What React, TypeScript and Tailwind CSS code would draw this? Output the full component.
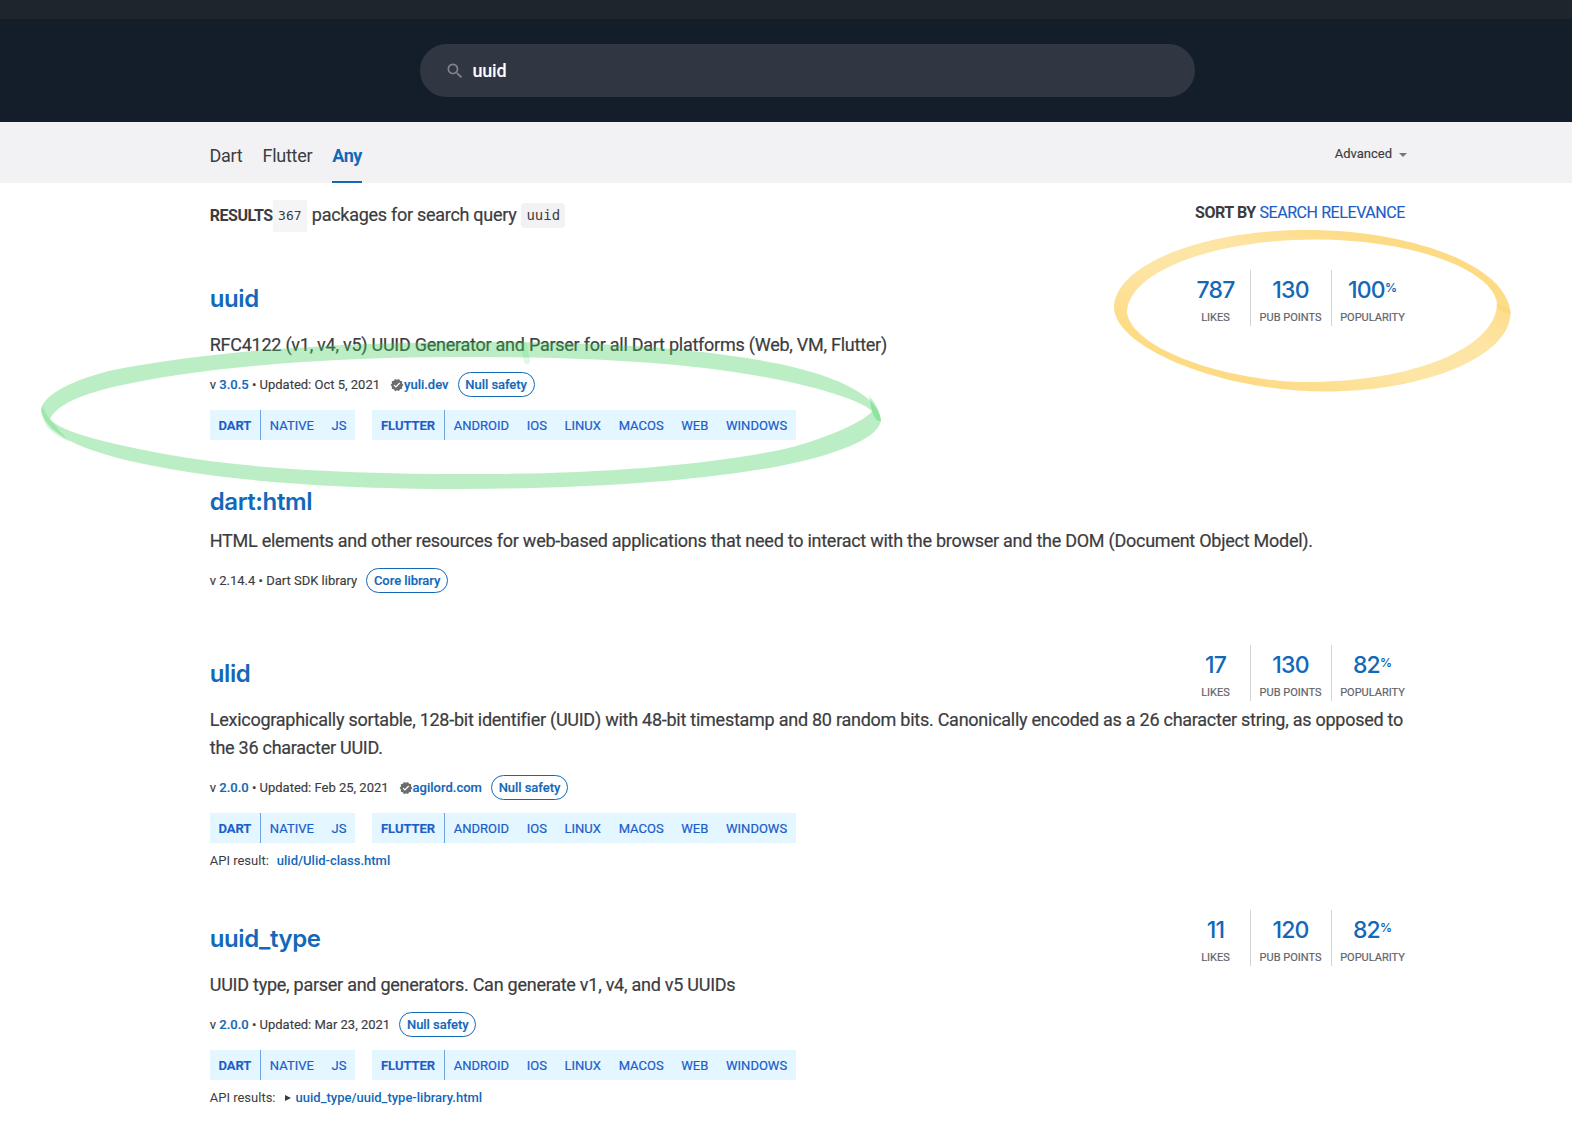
import type { ReactNode } from 'react';

type Score = { likes: string; points: string; popularity: string };

function SearchIcon() {
  return (
    <svg viewBox="0 0 24 24" className="size-5 fill-[#7f848c]">
      <path d="M15.5 14h-.79l-.28-.27A6.471 6.471 0 0 0 16 9.5 6.5 6.5 0 1 0 9.5 16c1.61 0 3.09-.59 4.23-1.57l.27.28v.79l5 4.99L20.49 19l-4.99-5zm-6 0C7.01 14 5 11.99 5 9.5S7.01 5 9.5 5 14 7.01 14 9.5 11.99 14 9.5 14z" />
    </svg>
  );
}

function VerifiedIcon() {
  return (
    <svg viewBox="0 0 24 24" className="size-[14px] shrink-0 fill-[#6d6d6d]">
      <path d="M23 12l-2.44-2.79.34-3.69-3.61-.82-1.89-3.2L12 2.96 8.6 1.5 6.71 4.69 3.1 5.5l.34 3.7L1 12l2.44 2.79-.34 3.7 3.61.82L8.6 22.5l3.4-1.47 3.4 1.46 1.89-3.19 3.61-.82-.34-3.69L23 12zm-12.91 4.72l-3.8-3.81 1.48-1.48 2.32 2.33 5.85-5.87 1.48 1.48-7.33 7.35z" />
    </svg>
  );
}

function Stat({ value, label, className, suffix }: { value: string; label: string; className: string; suffix?: string }) {
  return (
    <div className={`flex h-14 flex-col items-center ${className}`}>
      <div className="mt-1 flex h-8 items-center font-[Inter] text-[23px] font-medium tracking-[-0.8px] text-[#1268b9]">
        {value}
        {suffix && <span className="mb-[5px] text-[12px] font-semibold tracking-normal">{suffix}</span>}
      </div>
      <div className="h-5 whitespace-nowrap text-[11px] leading-[23px] text-[#5f6368] [-webkit-text-stroke:0.2px_#5f6368]">{label}</div>
    </div>
  );
}

function Scores({ score }: { score: Score }) {
  return (
    <div className="-mt-[13px] flex">
      <Stat value={score.likes} label="LIKES" className="w-[70px] pl-px" />
      <Stat value={score.points} label="PUB POINTS" className="w-[81px] border-l border-[#d4d4d6] pr-px" />
      <Stat value={score.popularity} suffix="%" label="POPULARITY" className="w-[75px] border-l border-[#d4d4d6] pl-[7px]" />
    </div>
  );
}

function Heading({ name, score }: { name: string; score?: Score }) {
  return (
    <div className="flex h-8 items-start justify-between">
      <h3 className="font-[Inter] text-[24px] font-semibold leading-8 tracking-[-0.4px] text-[#1268b9]">{name}</h3>
      {score && <Scores score={score} />}
    </div>
  );
}

function Pill({ children }: { children: ReactNode }) {
  return (
    <span className="ml-[9px] flex h-[25px] items-center rounded-full border border-[#1268b9] px-[6.8px] font-medium tracking-[-0.05px] text-[#1268b9]">
      {children}
    </span>
  );
}

function Meta({ children }: { children: ReactNode }) {
  return <div className="mt-[13px] flex h-[25px] items-center whitespace-pre text-[13px] [-webkit-text-stroke:0.15px_currentColor]">{children}</div>;
}

function Link({ children }: { children: ReactNode }) {
  return <a className="font-medium text-[#1268b9]">{children}</a>;
}

function TagGroup({ main, tags }: { main: string; tags: string[] }) {
  return (
    <div className="flex h-[30px] items-center bg-[#e4f6ff] text-[13px] text-[#1b5dc9] [-webkit-text-stroke:0.2px_#1b5dc9]">
      <span className="flex h-full items-center border-r border-[#6fa3e0] px-[8.7px] pt-px font-semibold">{main}</span>
      {tags.map((t) => (
        <span key={t} className="px-[8.85px] pt-px">{t}</span>
      ))}
    </div>
  );
}

function Tags() {
  return (
    <div className="mt-[13px] flex gap-[17px]">
      <TagGroup main="DART" tags={['NATIVE', 'JS']} />
      <TagGroup main="FLUTTER" tags={['ANDROID', 'IOS', 'LINUX', 'MACOS', 'WEB', 'WINDOWS']} />
    </div>
  );
}

function Annotations() {
  return (
    <svg viewBox="0 0 1572 1134" className="pointer-events-none absolute left-0 top-0 h-[1134px] w-[1572px]">
      <defs>
        <linearGradient id="amber" x1="0" y1="1" x2="1" y2="0">
          <stop offset="0.2" stopColor="#fbb90f" stopOpacity="0.51" />
          <stop offset="0.42" stopColor="#fcbe1e" stopOpacity="0.4" />
          <stop offset="0.6" stopColor="#fcbe1e" stopOpacity="0.4" />
          <stop offset="0.8" stopColor="#fbb90f" stopOpacity="0.51" />
        </linearGradient>
      </defs>
      <path
        fillRule="evenodd"
        fill="url(#amber)"
        d="M1114 308C1114 265 1202 230 1307 230C1412 230 1508 266 1510.500 313C1510.500 356 1426 391.500 1325 391.500C1222 391.500 1116 348 1114 308Z M1127 313C1127 272 1213 239.500 1317 239.500C1408 239.500 1492 268 1497 303C1497 348 1412 382 1307 382C1235 382 1134 352 1127 313Z"
      />
      <path d="M1496 306Q1502 312 1511 315L1511 310Q1504 308 1497 303Z" fill="#fbb90f" fillOpacity="0.15" />
      <path
        fillRule="evenodd"
        fill="#3ccd5a"
        fillOpacity="0.35"
        d="M41 410C43 394 75 379 113 370C225 349 350 342 490 342C600 342 700 348 780 364C840 377 878 396 881 420C879 440 830 456 780 466C690 483 570 489 460 489C330 489 230 480 170 469C90 455 46 437 41 410Z M50 419C58 403 85 394 113 387C200 367 330 357 460 357C590 357 690 362 780 380C820 388 860 400 872 411C865 422 820 441 780 450C690 467 590 474 470 474C350 474 250 469 170 455C110 444 60 432 50 419Z"
      />
      <path d="M41 410Q42 419 48 428Q58 437 70 442Q60 432 50 419Q45 414 43 406Z" fill="#3ccd5a" fillOpacity="0.22" />
      <path d="M869 396Q880 408 881 421L878 421Q873 416 872 411Z" fill="#3ccd5a" fillOpacity="0.35" />
      <path d="M524 345Q525 354 527 361" fill="none" stroke="#3ccd5a" strokeOpacity="0.15" strokeWidth="6" strokeLinecap="round" />
    </svg>
  );
}

const paragraph = 'whitespace-nowrap text-[18px] leading-7 tracking-[-0.255px] [-webkit-text-stroke:0.2px_#3c3c3e]';

export default function App() {
  return (
    <div className="relative h-[1134px] w-[1572px] overflow-hidden bg-white font-[Roboto,sans-serif] text-[#3c3c3e]">
      <div className="h-[19px] bg-[#1e252d]" />
      <header className="h-[103px] bg-[#131e2a] pl-[420px] pt-[25px]">
        <div className="flex h-[53px] w-[775px] items-center rounded-full bg-[#313742] pl-[25px] text-[18px] font-medium tracking-[-0.2px] text-white">
          <SearchIcon />
          <span className="ml-[7.5px]">uuid</span>
        </div>
      </header>
      <nav className="flex h-[61px] justify-between bg-[#f2f2f5] pl-[209.5px] pr-[165px]">
        <div className="flex gap-5 text-[18px] leading-[68px] tracking-[-0.26px]">
          <span>Dart</span>
          <span>Flutter</span>
          <span className="h-[61px] border-b-2 border-[#1268b9] font-bold tracking-[-0.45px] text-[#1268b9]">Any</span>
        </div>
        <div className="flex h-[63px] items-center text-[13px] [-webkit-text-stroke:0.15px_#3c3c3e]">
          Advanced
          <span className="ml-[7px] mt-[2px] border-x-4 border-t-4 border-x-transparent border-t-[#77777a]" />
        </div>
      </nav>
      <main className="w-[1406px] pl-[209.75px]">
        <div className="flex h-[100px] justify-between pt-[17px]">
          <div className="flex h-8 items-center whitespace-pre text-[18px]">
            <strong className="text-[16px] font-bold tracking-[-0.45px]">RESULTS</strong>
            <code className="h-8 bg-[#f5f5f7] px-[5.300px] font-['DejaVu_Sans_Mono'] text-[13px] leading-8">367</code>
            <span className="mb-[3px] ml-[5px] tracking-[-0.28px] [-webkit-text-stroke:0.2px_#3c3c3e]">packages for search query</span>
            <code className="mb-px ml-[5px] rounded bg-[#f2f2f5] px-[5px] font-['DejaVu_Sans_Mono'] text-[14px] leading-[25px]">uuid</code>
          </div>
          <div className="mr-px h-8 text-[16px] leading-[26px] tracking-[-0.42px]">
            <strong>SORT BY</strong> <a className="text-[#1b5dc9] [-webkit-text-stroke:0.15px_#1b5dc9]">SEARCH RELEVANCE</a>
          </div>
        </div>
        <section className="h-[203px]">
          <Heading name="uuid" score={{ likes: '787', points: '130', popularity: '100' }} />
          <p className={`mt-4 ${paragraph}`}>RFC4122 (v1, v4, v5) UUID Generator and Parser for all Dart platforms (Web, VM, Flutter)</p>
          <Meta>
            v <Link>3.0.5</Link> • Updated: Oct 5, 2021
            <span className="ml-[10px] flex items-center"><VerifiedIcon /><Link>yuli.dev</Link></span>
            <Pill>Null safety</Pill>
          </Meta>
          <Tags />
        </section>
        <section className="h-[172px]">
          <Heading name="dart:html" />
          <p className={`mt-[9px] ${paragraph}`}>HTML elements and other resources for web-based applications that need to interact with the browser and the DOM (Document Object Model).</p>
          <Meta>v 2.14.4 • Dart SDK library<Pill>Core library</Pill></Meta>
        </section>
        <section className="h-[265px]">
          <Heading name="ulid" score={{ likes: '17', points: '130', popularity: '82' }} />
          <p className={`mt-4 ${paragraph}`}>
            Lexicographically sortable, 128-bit identifier (UUID) with 48-bit timestamp and 80 random bits. Canonically encoded as a 26 character string, as opposed to<br />the 36 character UUID.
          </p>
          <Meta>
            v <Link>2.0.0</Link> • Updated: Feb 25, 2021
            <span className="ml-[10px] flex items-center"><VerifiedIcon /><Link>agilord.com</Link></span>
            <Pill>Null safety</Pill>
          </Meta>
          <Tags />
          <div className="mt-1 flex h-7 items-center gap-2 text-[13px]">API result: <Link>ulid/Ulid-class.html</Link></div>
        </section>
        <section>
          <Heading name="uuid_type" score={{ likes: '11', points: '120', popularity: '82' }} />
          <p className={`mt-4 ${paragraph}`}>UUID type, parser and generators. Can generate v1, v4, and v5 UUIDs</p>
          <Meta>
            v <Link>2.0.0</Link> • Updated: Mar 23, 2021
            <Pill>Null safety</Pill>
          </Meta>
          <Tags />
          <div className="mt-1 flex h-7 items-center text-[13px]">
            API results:
            <span className="ml-[9px] mr-[5px] border-y-[3px] border-l-[6px] border-y-transparent border-l-[#3c3c3e]" />
            <Link>uuid_type/uuid_type-library.html</Link>
          </div>
        </section>
      </main>
      <Annotations />
    </div>
  );
}
